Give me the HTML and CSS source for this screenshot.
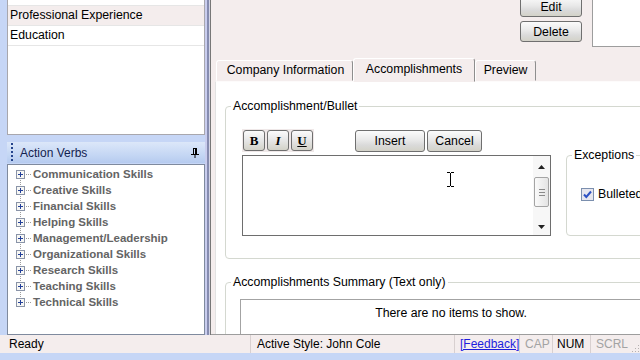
FILE: index.html
```html
<!DOCTYPE html>
<html lang="en">

<head>
  <meta charset="UTF-8">
  <title>Resume Builder</title>
  <link rel="stylesheet" href="styles.css">
</head>

<body>
  <div class="window">
    <div class="workspace">
      <aside class="sidebar">
        <ul class="sections">
          <li class="cut">Professional Summary</li>
          <li class="selected">Professional Experience</li>
          <li>Education</li>
        </ul>

        <div class="pane-head">
          <span class="grip"></span>
          <span class="pane-title">Action Verbs</span>
          <svg class="pin" width="8" height="10" viewBox="0 0 8 10">
            <path d="M2 0.5H6M2.5 1V6M4.5 1V6M5.5 1V6M0 6.5H8M4 7V10" stroke="#000" fill="none" />
          </svg>
        </div>

        <div class="tree">
          <ul class="tree__items">
            <li><svg class="expander" width="9" height="9" viewBox="0 0 9 9"><rect x="0.5" y="0.5" width="8" height="8" fill="#f7f7f4" stroke="#8a94a8" /><path d="M2 4.5H7M4.5 2V7" stroke="#23409a" /></svg><span class="stem"></span>Communication Skills</li>
            <li><svg class="expander" width="9" height="9" viewBox="0 0 9 9"><rect x="0.5" y="0.5" width="8" height="8" fill="#f7f7f4" stroke="#8a94a8" /><path d="M2 4.5H7M4.5 2V7" stroke="#23409a" /></svg><span class="stem"></span>Creative Skills</li>
            <li><svg class="expander" width="9" height="9" viewBox="0 0 9 9"><rect x="0.5" y="0.5" width="8" height="8" fill="#f7f7f4" stroke="#8a94a8" /><path d="M2 4.5H7M4.5 2V7" stroke="#23409a" /></svg><span class="stem"></span>Financial Skills</li>
            <li><svg class="expander" width="9" height="9" viewBox="0 0 9 9"><rect x="0.5" y="0.5" width="8" height="8" fill="#f7f7f4" stroke="#8a94a8" /><path d="M2 4.5H7M4.5 2V7" stroke="#23409a" /></svg><span class="stem"></span>Helping Skills</li>
            <li><svg class="expander" width="9" height="9" viewBox="0 0 9 9"><rect x="0.5" y="0.5" width="8" height="8" fill="#f7f7f4" stroke="#8a94a8" /><path d="M2 4.5H7M4.5 2V7" stroke="#23409a" /></svg><span class="stem"></span>Management/Leadership</li>
            <li><svg class="expander" width="9" height="9" viewBox="0 0 9 9"><rect x="0.5" y="0.5" width="8" height="8" fill="#f7f7f4" stroke="#8a94a8" /><path d="M2 4.5H7M4.5 2V7" stroke="#23409a" /></svg><span class="stem"></span>Organizational Skills</li>
            <li><svg class="expander" width="9" height="9" viewBox="0 0 9 9"><rect x="0.5" y="0.5" width="8" height="8" fill="#f7f7f4" stroke="#8a94a8" /><path d="M2 4.5H7M4.5 2V7" stroke="#23409a" /></svg><span class="stem"></span>Research Skills</li>
            <li><svg class="expander" width="9" height="9" viewBox="0 0 9 9"><rect x="0.5" y="0.5" width="8" height="8" fill="#f7f7f4" stroke="#8a94a8" /><path d="M2 4.5H7M4.5 2V7" stroke="#23409a" /></svg><span class="stem"></span>Teaching Skills</li>
            <li><svg class="expander" width="9" height="9" viewBox="0 0 9 9"><rect x="0.5" y="0.5" width="8" height="8" fill="#f7f7f4" stroke="#8a94a8" /><path d="M2 4.5H7M4.5 2V7" stroke="#23409a" /></svg><span class="stem"></span>Technical Skills</li>
          </ul>
        </div>
      </aside>

      <div class="splitter"></div>

      <main class="editor">
        <div class="actions">
          <div class="actions__buttons">
            <button class="btn btn--wide">Edit</button>
            <button class="btn btn--wide">Delete</button>
          </div>
          <div class="preview-box"></div>
        </div>

        <div class="tabs">
          <div class="tab tab--company">Company Information</div>
          <div class="tab tab--active">Accomplishments</div>
          <div class="tab tab--preview">Preview</div>
        </div>

        <div class="panel">
          <fieldset class="group group--bullet">
            <legend>Accomplishment/Bullet</legend>
            <div class="bullet-body">
              <div class="bullet-editor">
                <div class="toolbar">
                  <div class="format">
                    <button class="fmt fmt--b">B</button>
                    <button class="fmt fmt--i">I</button>
                    <button class="fmt fmt--u">U</button>
                  </div>
                  <button class="btn btn--insert">Insert</button>
                  <button class="btn btn--cancel">Cancel</button>
                </div>
                <div class="textbox">
                  <div class="textbox__area">
                    <svg class="ibeam" width="9" height="15" viewBox="0 0 9 15">
                      <path d="M1 0.5H4M5 0.5H8M4.5 1V14M1 14.5H4M5 14.5H8" stroke="#000" fill="none" />
                    </svg>
                  </div>
                  <div class="vscroll">
                    <div class="vscroll__btn">
                      <svg width="7" height="4" viewBox="0 0 7 4"><path d="M3.5 0L7 4H0z" fill="#222" /></svg>
                    </div>
                    <div class="vscroll__thumb"><span></span><span></span><span></span></div>
                    <div class="vscroll__track"></div>
                    <div class="vscroll__btn">
                      <svg width="7" height="4" viewBox="0 0 7 4"><path d="M0 0H7L3.5 4z" fill="#222" /></svg>
                    </div>
                  </div>
                </div>
              </div>

              <fieldset class="group group--exceptions">
                <legend>Exceptions</legend>
                <label class="check">
                  <svg width="13" height="13" viewBox="0 0 13 13">
                    <rect x="0.5" y="0.5" width="12" height="12" fill="#e6e6ee" stroke="#7b8fae" />
                    <path d="M3 6.5L5.3 9L10 3.5" stroke="#2d52c4" stroke-width="2" fill="none" />
                  </svg>
                  Bulleted
                </label>
              </fieldset>
            </div>
          </fieldset>

          <fieldset class="group group--summary">
            <legend>Accomplishments Summary (Text only)</legend>
            <div class="summary-list">There are no items to show.</div>
          </fieldset>
        </div>
      </main>
    </div>

    <footer class="status">
      <div class="status__pane status__pane--ready">Ready</div>
      <div class="status__pane status__pane--style">Active Style: John Cole</div>
      <div class="status__pane status__pane--feedback"><a href="#">[Feedback]</a></div>
      <div class="status__pane status__pane--cap off">CAP</div>
      <div class="status__pane status__pane--num">NUM</div>
      <div class="status__pane status__pane--scrl off">SCRL</div>
      <div class="status__grip">
        <svg width="12" height="12" viewBox="0 0 12 12">
          <path d="M10 10h1v1h-1zM7 10h1v1H7zM10 7h1v1h-1zM4 10h1v1H4zM7 7h1v1H7zM10 4h1v1h-1z" fill="#b5b0b0" />
        </svg>
      </div>
    </footer>
  </div>
</body>

</html>
```

FILE: styles.css
```css
* {
  margin: 0;
  padding: 0;
  box-sizing: border-box;
  font-family: "Liberation Sans", Arial, sans-serif;
  color: #000;
}

body {
  width: 640px;
  height: 360px;
  overflow: hidden;
  background-color: #c6d6f6;
  font-size: 12.3px;
}

.workspace {
  display: flex;
  height: 335px;
}

/* left side */

.sidebar {
  flex: none;
  width: 205px;
  padding-left: 7px;
  display: flex;
  flex-direction: column;
}

.sections {
  list-style: none;
  height: 135px;
  overflow: hidden;
  background-color: #fff;
  border: 1px solid #a8a7ad;
  border-top: none;
}

.sections li {
  height: 20px;
  line-height: 19px;
  padding-left: 2px;
  border-bottom: 1px solid #e6e6e6;
}

.sections .cut {
  margin-top: -14px;
  line-height: 14px;
}

.sections .selected {
  background-color: #f4eded;
}

.pane-head {
  margin-top: 7px;
  height: 21px;
  display: flex;
  align-items: center;
  padding: 0 6px 0 4px;
  background: linear-gradient(#dce7f9, #c5d7f4 60%, #b6cbef);
}

.grip {
  width: 2px;
  height: 19px;
  background: repeating-linear-gradient(#24448c 0 2px, transparent 2px 4px);
}

.pane-title {
  flex: 1;
  margin-left: 7px;
  font-size: 12px;
  color: #13224f;
}

.tree {
  flex: 1;
  margin-top: 1px;
  padding-top: 1px;
  background-color: #fff;
  border: 1px solid #7f8a9e;
}

.tree__items {
  position: relative;
  list-style: none;
}

.tree__items::before {
  content: "";
  position: absolute;
  left: 12px;
  top: 9px;
  bottom: 9px;
  border-left: 1px dotted #9c9c9c;
}

.tree__items li {
  height: 16px;
  display: flex;
  align-items: center;
  padding-left: 8px;
  font-size: 11.5px;
  font-weight: bold;
  color: #646464;
}

.expander {
  position: relative;
  flex: none;
}

.stem {
  width: 5px;
  margin: 0 2px 0 1px;
  border-top: 1px dotted #9c9c9c;
}

.splitter {
  flex: none;
  width: 6px;
  background: linear-gradient(to right, #c9cdee 0 2px, #868cb0 2px 4px, #d4d6e6 4px 5px, #777 5px);
}

/* main editor */

.editor {
  flex: 1;
  display: flex;
  flex-direction: column;
  overflow: hidden;
  background-color: #f4eded;
  border-bottom: 1px solid #9d9d9d;
}

.actions {
  flex: none;
  height: 58px;
  display: flex;
  justify-content: flex-end;
  gap: 10px;
  margin-right: -2px;
}

.actions__buttons {
  display: flex;
  flex-direction: column;
  gap: 4px;
  margin-top: -4px;
}

.btn {
  height: 21px;
  font-size: 12.3px;
  border: 1px solid #6f6f6f;
  border-radius: 3px;
  background: linear-gradient(#fbfbfb, #e9e9e9 45%, #dadada 70%, #d3d2c8);
}

.btn--wide {
  width: 62px;
}

.preview-box {
  width: 50px;
  height: 48px;
  margin-top: -1px;
  background-color: #fff;
  border: 1px solid #9d9d9d;
}

.tabs {
  flex: none;
  display: flex;
  align-items: flex-end;
  height: 23px;
  padding-left: 5px;
  position: relative;
  z-index: 1;
}

.tab {
  height: 21px;
  line-height: 19px;
  text-align: center;
  background-color: #f4eded;
  border: 1px solid;
  border-color: #fff #8e8e8e transparent #fff;
  border-radius: 3px 3px 0 0;
}

.tab--company {
  width: 137px;
  padding-left: 2px;
}

.tab--active {
  width: 122px;
  height: 24px;
  margin-bottom: -1px;
  line-height: 20px;
}

.tab--preview {
  width: 61px;
}

.panel {
  flex: 1;
  width: 470px;
  margin-left: 4px;
  padding-left: 9px;
  background-color: #fff;
  border-top: 1px solid #fdfbfb;
  border-left: 1px solid #e2e2e2;
}

.group {
  border: 1px solid #d4d8d0;
  border-radius: 4px;
}

.group legend {
  padding: 0 2px;
  line-height: 15px;
}

.group--bullet {
  width: 450px;
  margin-top: 17px;
  padding: 15px 0 22px 16px;
}

.group--bullet > legend {
  margin-left: -11px;
}

.bullet-body {
  display: flex;
}

.bullet-editor {
  width: 309px;
}

.toolbar {
  height: 23px;
  display: flex;
  align-items: center;
}

.format {
  display: flex;
  gap: 2px;
  padding: 1px;
  background-color: #efe8e8;
}

.fmt {
  width: 22px;
  height: 21px;
  font-family: "Liberation Serif", "Times New Roman", serif;
  font-weight: bold;
  font-size: 13px;
  border: 1px solid #6f6f6f;
  border-radius: 3px;
  background: linear-gradient(#fbfbfb, #e6e6e6 50%, #d3d2c8);
}

.fmt--i {
  font-style: italic;
}

.fmt--u {
  text-decoration: underline;
}

.btn--insert {
  width: 70px;
  height: 22px;
  margin-left: 41px;
}

.btn--cancel {
  width: 55px;
  height: 22px;
  margin-left: 2px;
}

.textbox {
  display: flex;
  height: 81px;
  margin-top: 3px;
  border: 1px solid #6e6e6e;
}

.textbox__area {
  flex: 1;
  position: relative;
}

.ibeam {
  position: absolute;
  left: 203px;
  top: 16px;
}

.vscroll {
  width: 17px;
  display: flex;
  flex-direction: column;
  background-color: #f7f7f7;
}

.vscroll__btn {
  height: 17px;
  display: flex;
  align-items: center;
  justify-content: center;
}

.vscroll__btn:first-child {
  height: 21px;
}

.vscroll__thumb {
  height: 30px;
  margin: 0 1px;
  display: flex;
  flex-direction: column;
  align-items: center;
  justify-content: center;
  gap: 2px;
  border: 1px solid #a4a4a4;
  border-radius: 2px;
  background: linear-gradient(to right, #fafafa, #e4e4e4);
}

.vscroll__thumb span {
  width: 6px;
  height: 1px;
  background-color: #8a8a8a;
}

.vscroll__track {
  flex: 1;
}

.group--exceptions {
  width: 100px;
  height: 88px;
  margin: 19px 0 0 15px;
  padding: 24px 0 0 14px;
}

.group--exceptions > legend {
  margin-left: -9px;
}

.check {
  display: flex;
  align-items: center;
  gap: 4px;
}

.group--summary {
  width: 450px;
  height: 120px;
  margin-top: 16px;
  padding: 9px 0 0 14px;
}

.group--summary > legend {
  margin-left: -9px;
}

.summary-list {
  width: 422px;
  height: 80px;
  padding-top: 6px;
  text-align: center;
  border: 1px solid #a3a3a3;
}

/* status bar */

.status {
  display: flex;
  height: 18px;
  line-height: 18px;
  font-size: 12px;
  background-color: #f4eded;
}

.status__pane {
  padding-left: 5px;
  border-left: 1px solid #d8d0d0;
}

.status__pane--ready {
  flex: 1;
  padding-left: 9px;
  border-left: none;
}

.status__pane--style {
  width: 204px;
  padding-left: 6px;
}

.status__pane--feedback {
  width: 65px;
}

.status__pane--feedback a {
  color: #1d1ddd;
}

.status__pane--cap {
  width: 33px;
}

.status__pane--num {
  width: 38px;
  padding-left: 4px;
}

.status__pane--scrl {
  width: 38px;
}

.status__pane.off {
  color: #a3a3a3;
}

.status__grip {
  width: 12px;
  display: flex;
  align-items: flex-end;
}
```
